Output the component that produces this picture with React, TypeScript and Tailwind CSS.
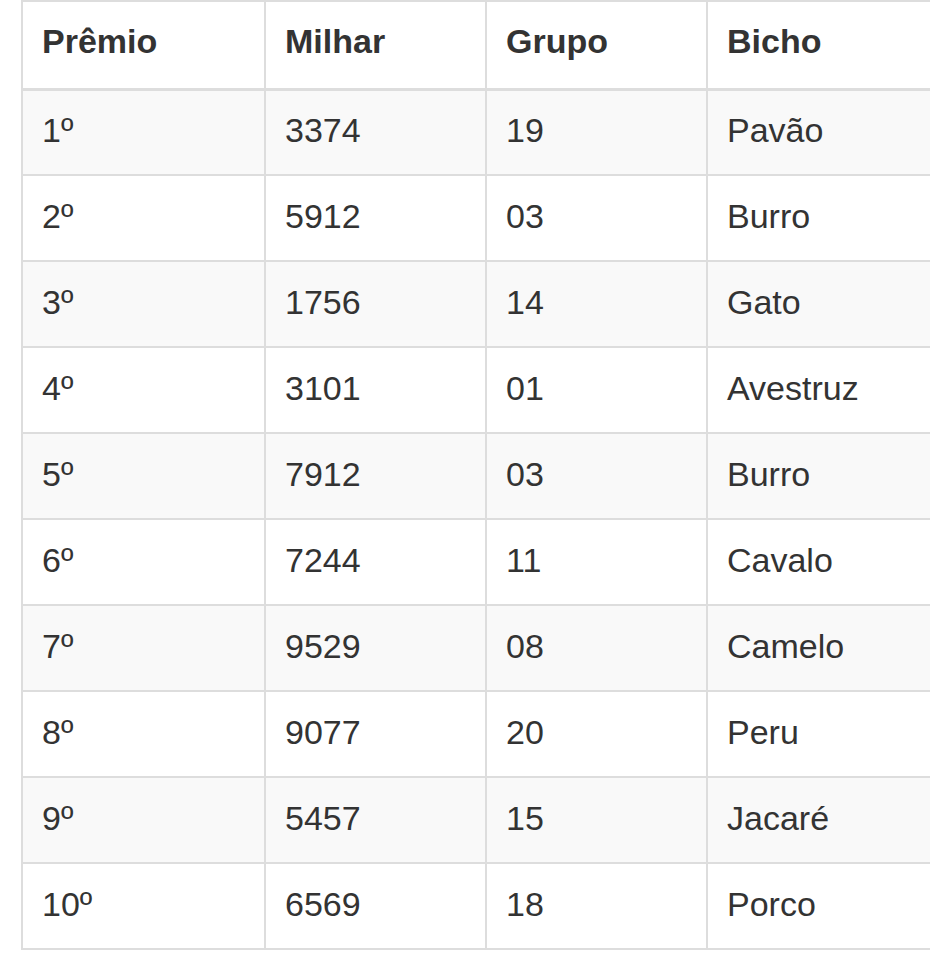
const rows = [
  ["1º", "3374", "19", "Pavão"],
  ["2º", "5912", "03", "Burro"],
  ["3º", "1756", "14", "Gato"],
  ["4º", "3101", "01", "Avestruz"],
  ["5º", "7912", "03", "Burro"],
  ["6º", "7244", "11", "Cavalo"],
  ["7º", "9529", "08", "Camelo"],
  ["8º", "9077", "20", "Peru"],
  ["9º", "5457", "15", "Jacaré"],
  ["10º", "6569", "18", "Porco"],
];

const headers = ["Prêmio", "Milhar", "Grupo", "Bicho"];

export default function App() {
  return (
    <div className="w-[930px] h-[953px] overflow-hidden bg-white pl-[21px]" style={{ fontFamily: '"Liberation Sans", Arial, sans-serif' }}>
      <table className="table-fixed border-collapse w-[1000px] text-[34px] leading-[47px] text-[#333333]">
        <colgroup>
          <col className="w-[243px]" />
          <col className="w-[221px]" />
          <col className="w-[221px]" />
          <col />
        </colgroup>
        <thead>
          <tr>
            {headers.map(h => (
              <th key={h} className="h-[88px] border-2 border-b-[3px] border-[#dddddd] px-[19px] pb-[7px] text-left font-bold align-middle">
                {h}
              </th>
            ))}
          </tr>
        </thead>
        <tbody>
          {rows.map((r, i) => (
            <tr key={r[0]} className={i % 2 === 0 ? "bg-[#f9f9f9]" : "bg-white"}>
              {r.map((c, j) => (
                <td key={j} className="h-[86px] border-2 border-[#dddddd] px-[19px] pb-[3px] align-middle">
                  {c}
                </td>
              ))}
            </tr>
          ))}
        </tbody>
      </table>
    </div>
  );
}
